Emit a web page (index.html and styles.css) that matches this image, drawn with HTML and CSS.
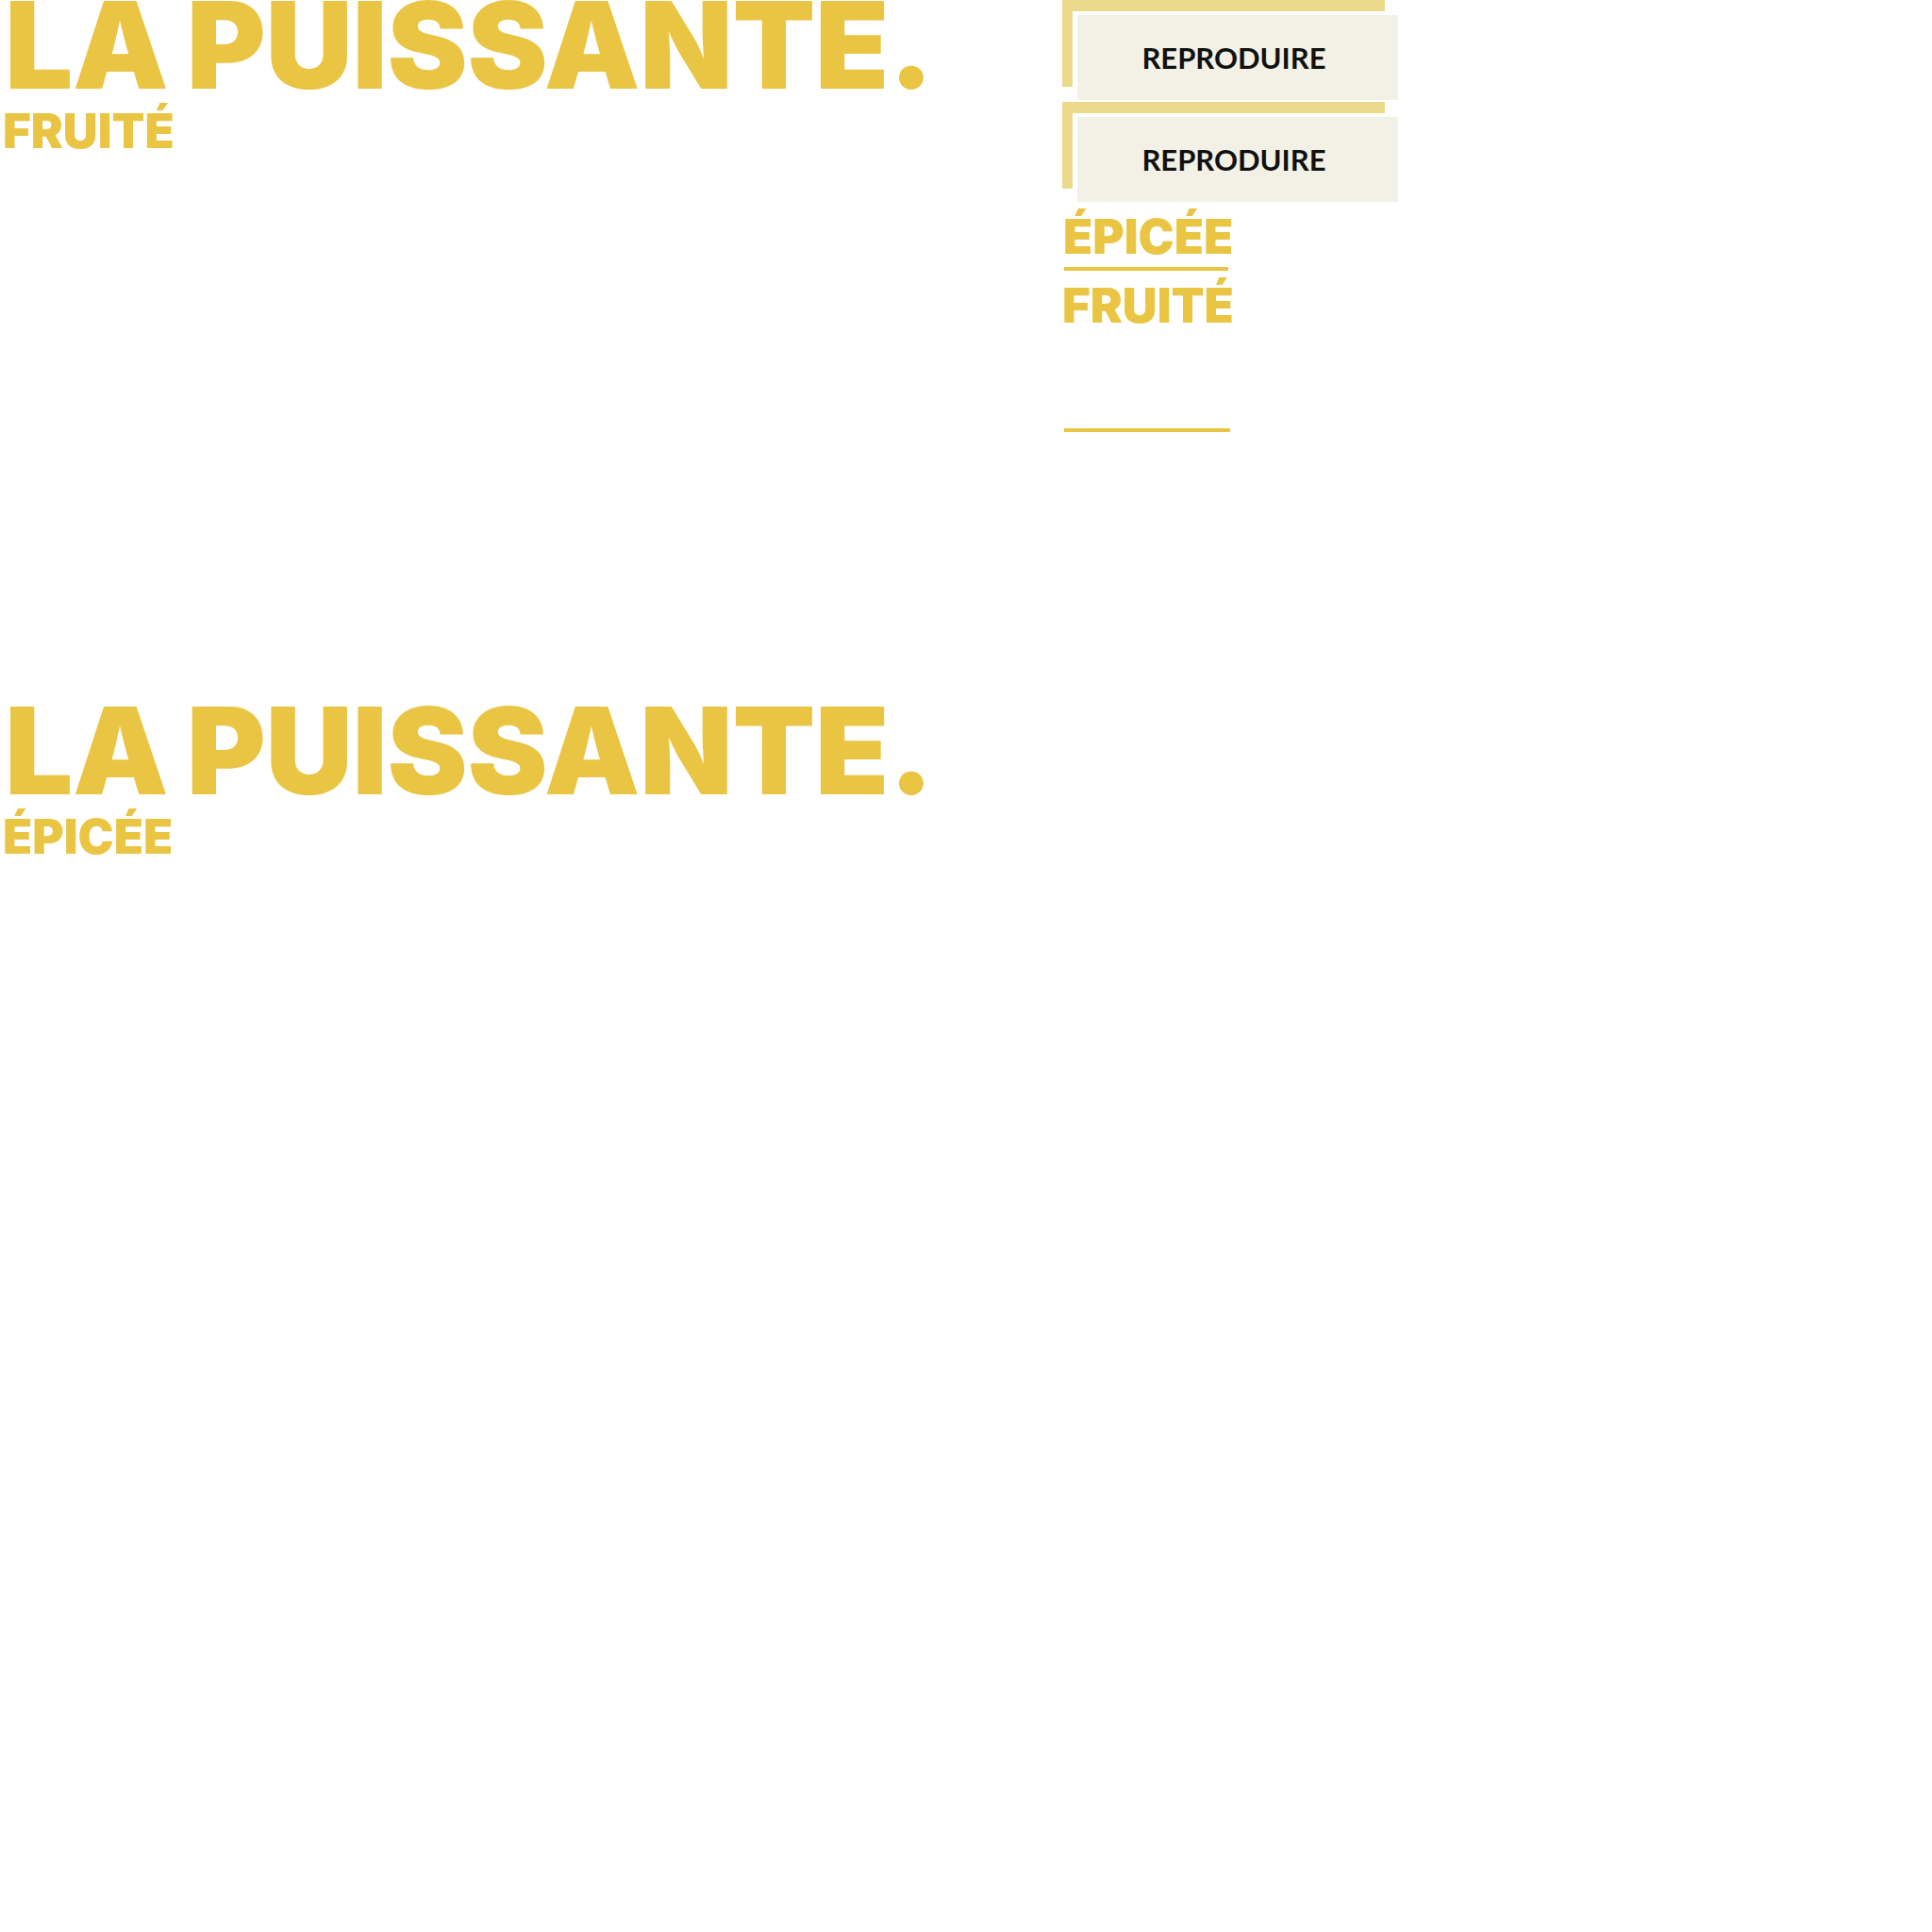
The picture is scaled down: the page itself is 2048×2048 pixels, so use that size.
FILE: index.html
```html
<!DOCTYPE html>
<html lang="fr">
<head>
<meta charset="utf-8">
<title>La puissante</title>
<link rel="stylesheet" href="styles.css">
</head>
<body>
<div class="page">
  <div class="main">
    <section class="block">
      <h1 class="headline">LA PUISSANTE.</h1>
      <p class="label label-left">FRUITÉ</p>
    </section>
    <section class="block">
      <h1 class="headline">LA PUISSANTE.</h1>
      <p class="label label-left label-epice">ÉPICÉE</p>
    </section>
  </div>
  <aside class="side">
    <button class="btn"><span class="btn-face">REPRODUIRE</span></button>
    <button class="btn"><span class="btn-face">REPRODUIRE</span></button>
    <p class="label side-epice">ÉPICÉE</p>
    <div class="rule rule-top"></div>
    <p class="label side-fruit">FRUITÉ</p>
    <div class="rule rule-bottom"></div>
  </aside>
</div>
</body>
</html>
```

FILE: styles.css
```css
html, body {
  margin: 0;
  padding: 0;
  background: #ffffff;
}

.page {
  display: grid;
  grid-template-columns: 1126px 400px;
  align-items: start;
}

.main {
  display: flex;
  flex-direction: column;
}

.block {
  height: 748px;
  display: flex;
  flex-direction: column;
  align-items: flex-start;
}

.headline {
  margin: 0 0 0 5px;
  font-family: "Inter", "Liberation Sans", sans-serif;
  font-weight: 900;
  font-size: 128px;
  line-height: 0.75;
  color: #e9c543;
  letter-spacing: -0.3px;
  word-spacing: -6px;
  white-space: nowrap;
}

.label {
  margin: 0;
  font-family: "Inter", "Liberation Sans", sans-serif;
  font-weight: 900;
  font-size: 51px;
  line-height: 1;
  color: #e9c543;
  white-space: nowrap;
}

.label-left {
  margin-top: 17px;
  margin-left: 3px;
}

.side {
  display: flex;
  flex-direction: column;
  align-items: flex-start;
}

.btn {
  position: relative;
  display: block;
  width: 356px;
  height: 106px;
  margin: 0 0 2px 0;
  padding: 16px 0 0 16px;
  border: 0;
  background: transparent;
  cursor: pointer;
}

.btn::before {
  content: "";
  position: absolute;
  top: 0;
  left: 0;
  width: 331px;
  height: 80px;
  border-top: 12px solid #ebda8b;
  border-left: 11px solid #ebda8b;
}

.btn-face {
  display: flex;
  align-items: center;
  justify-content: center;
  width: 340px;
  height: 90px;
  background: #f3f1e5;
  font-family: "Lato", "Liberation Sans", sans-serif;
  font-weight: 700;
  font-size: 31px;
  color: #111111;
  padding-right: 8px;
  box-sizing: border-box;
}

.side-epice {
  margin-top: 9px;
  margin-left: 1px;
}

.rule {
  height: 4px;
  background: #e9c543;
  margin-left: 2px;
}

.rule-top {
  width: 174px;
  margin-top: 7px;
}

.side-fruit {
  margin-top: 11px;
}

.rule-bottom {
  width: 176px;
  margin-top: 105px;
}
```
